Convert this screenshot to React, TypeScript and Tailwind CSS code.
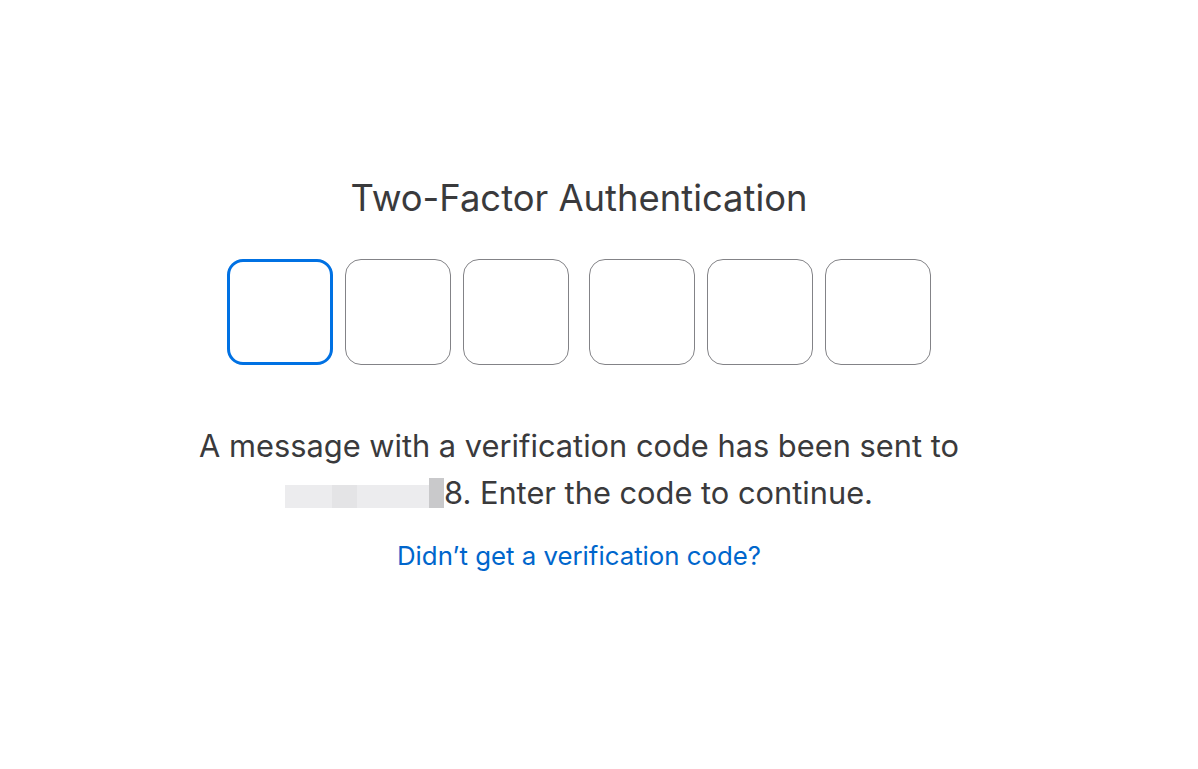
export default function App() {
  const boxes = [0, 1, 2, 3, 4, 5]
  return (
    <div className="min-h-[769px] w-full bg-white font-['Inter','Noto_Sans',sans-serif] text-[#333336]">
      <div className="flex w-[1158px] flex-col items-center pt-[173px]">
        <h1 className="text-[36.4px] leading-[50px] text-[#3a3a3c]">Two-Factor Authentication</h1>
        <div className="mt-[36px] flex items-center">
          {boxes.map((i) => (
            <div
              key={i}
              className={
                (i === 0
                  ? "border-[3px] border-[#0071e3] "
                  : "border-[1.5px] border-[#838387] ") +
                (i === 3 ? "ml-[20px] " : i > 0 ? "ml-[12px] " : "") +
                "h-[106px] w-[106px] rounded-[16px] bg-white"
              }
            />
          ))}
        </div>
        <p className="mt-[57px] w-[800px] text-center text-[30.8px] leading-[47px] text-[#3a3a3c]">
          A message with a verification code has been sent to{" "}
          <span className="inline-flex h-[30px] translate-y-[4px] items-end align-baseline">
            <span className="h-[23px] w-[47px] bg-[#ececee]" />
            <span className="h-[23px] w-[25px] bg-[#e4e4e6]" />
            <span className="h-[23px] w-[72px] bg-[#ececee]" />
            <span className="h-[30px] w-[15px] bg-[#c9c9cb]" />
          </span>
          8. Enter the code to continue.
        </p>
        <a className="mt-[23px] text-[25.8px] leading-[34px] text-[#0066cc]" href="#">
          Didn’t get a verification code?
        </a>
      </div>
    </div>
  )
}
